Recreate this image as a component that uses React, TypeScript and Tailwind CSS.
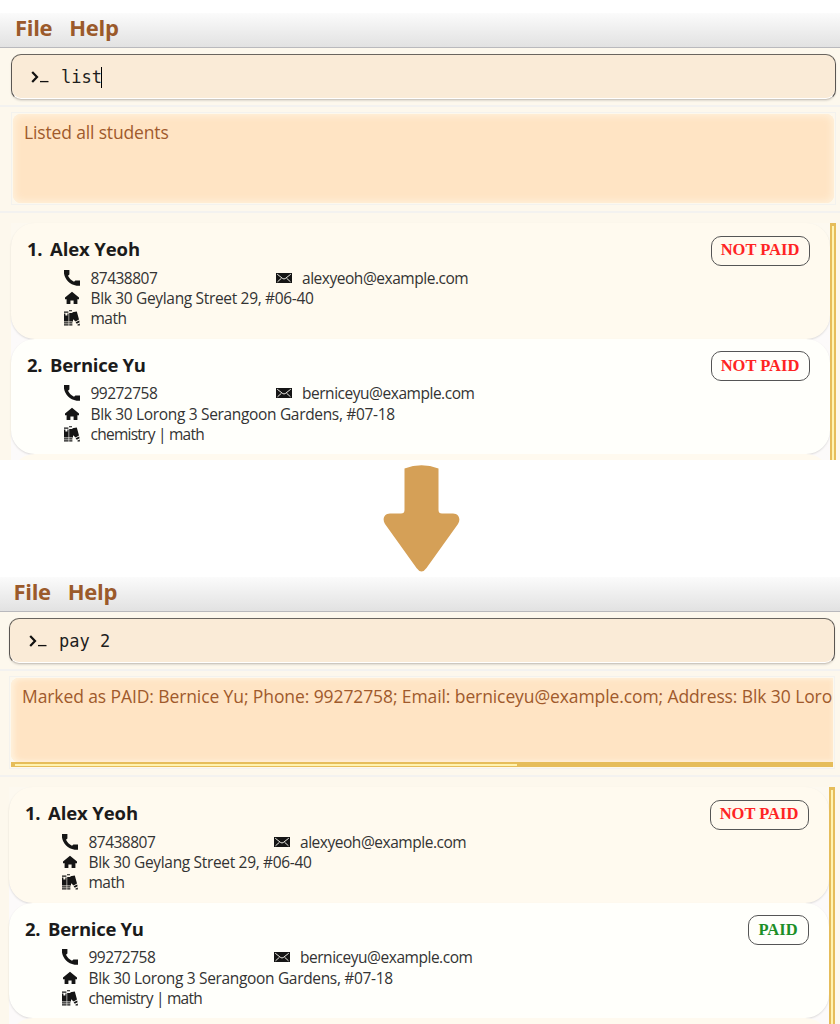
import React from "react";
import clsx from "clsx";

type Student = {
  name: string;
  phone: string;
  email: string;
  address: string;
  subjects: string;
  paid: boolean;
};

const alex: Student = {
  name: "Alex Yeoh",
  phone: "87438807",
  email: "alexyeoh@example.com",
  address: "Blk 30 Geylang Street 29, #06-40",
  subjects: "math",
  paid: false,
};

const bernice: Student = {
  name: "Bernice Yu",
  phone: "99272758",
  email: "berniceyu@example.com",
  address: "Blk 30 Lorong 3 Serangoon Gardens, #07-18",
  subjects: "chemistry | math",
  paid: false,
};

function PhoneIcon() {
  return (
    <svg className="h-4 w-4" viewBox="0 0 16 16" fill="#151515">
      <path d="M0 0H5.4V4.6L4 5.8C5.2 8.4 7.2 10.4 10 11.8L11.4 10.4H16V15.8H12.6C5.8 14.6 1 9.8 0 3.6Z" />
    </svg>
  );
}

function HomeIcon() {
  return (
    <svg className="h-4 w-4" viewBox="0 0 16 16" fill="#151515">
      <path d="M8 1.8L15 7.6V9.2H13.4V14H9.6V10.4H6.4V14H2.6V9.2H1V7.6Z" />
    </svg>
  );
}

function BooksIcon() {
  return (
    <svg className="h-4 w-4" viewBox="0 0 16 16" fill="#151515">
      <path d="M0 1.6H4.4V2.8H0ZM0 3.6H1.4V11.6H0ZM3.4 3.6H4.6V11.6H3.4ZM1.4 5.6H3.4V11.6H1.4ZM0 12.2H4.6V13.4H0ZM0 14.2H4.6V15.6H0Z" />
      <path d="M5 0.2H8V1.2H5ZM5.2 3H9V11.6H5.2ZM5.2 12.2H8.4V13.4H5.2ZM5.2 14.2H8.4V15.6H5.2Z" />
      <path d="M8.4 2.2L12.8 1.4L15 9.4L11.6 11.6L8.8 9ZM11.6 12.2L15.2 10.4L15.6 12.2L12.8 13.8ZM13.3 14.8L15.8 13.6V15.5H13.6Z" />
    </svg>
  );
}

function MailIcon() {
  return (
    <svg className="h-4 w-4" viewBox="0 0 16 16">
      <rect y="3" width="16" height="10" fill="#151515" />
      <path d="M1.2 4.2L6.8 8.6Q8 9.3 9.2 8.6L14.8 4.2M1.5 11.8L5.5 8.2M14.5 11.8L10.5 8.2" fill="none" stroke="#e8e6e0" strokeWidth="1" />
    </svg>
  );
}

function StudentCard({ student, index }: { student: Student; index: number }) {
  return (
    <div
      className={clsx(
        "flex h-[115.5px] shrink-0 items-start justify-between rounded-[24px] pl-4 pr-[20.5px] pt-3 text-[#333] shadow-[0_1px_2px_rgba(0,0,0,0.13)]",
        index % 2 ? "bg-[#fffffb]" : "bg-[#fffaef]",
      )}
    >
      <div className="flex flex-col">
        <div className="flex h-7 items-center text-[18.5px] font-bold text-[#1b1b1b]">
          <span className="w-[23px] tracking-[-0.3px]">{index + 1}.</span>
          <span className={clsx("whitespace-nowrap", index % 2 ? "tracking-[-0.28px]" : "tracking-[-0.1px]")}>{student.name}</span>
        </div>
        <div className="mt-[4.6px] grid grid-cols-[185px_auto] pl-[37px] text-[15.5px] leading-5">
          <div className="flex h-[20.3px] items-center gap-[10.5px]">
            <PhoneIcon />
            <span className="tracking-[-0.52px]">{student.phone}</span>
          </div>
          <div className="flex h-[20.3px] items-center gap-[10px] pl-[27px]">
            <MailIcon />
            <span className="tracking-[-0.47px]">{student.email}</span>
          </div>
          <div className="col-span-2 flex h-[20.3px] items-center gap-[10.5px] whitespace-nowrap">
            <HomeIcon />
            <span className="tracking-[-0.33px]">{student.address}</span>
          </div>
          <div className="col-span-2 flex h-[20.3px] items-center gap-[10.5px]">
            <BooksIcon />
            <span className={student.subjects.length > 4 ? "tracking-[-0.75px]" : "tracking-[-0.5px]"}>{student.subjects}</span>
          </div>
        </div>
      </div>
      <span
        className={clsx(
          "mt-[0.5px] flex h-[30px] items-center justify-center rounded-[10px] border-[1.5px] border-[#555] font-['Liberation_Serif',serif] text-[16.5px] font-bold",
          student.paid ? "w-[61px] text-[#1d8f27]" : "w-[99px] text-[#ff2424]",
        )}
      >
        {student.paid ? "PAID" : "NOT PAID"}
      </span>
    </div>
  );
}

type WindowProps = {
  command: string;
  message: string;
  students: Student[];
  caret?: boolean;
  scrollable?: boolean;
  inset: string;
};

function AppWindow({ command, message, students, caret, scrollable, inset }: WindowProps) {
  return (
    <section className="flex h-[447px] w-full shrink-0 flex-col overflow-hidden bg-[#fdf8ed]">
      <nav
        className={clsx(
          "flex h-[35px] shrink-0 items-center gap-[17px] border-b border-[#b9b9bd] bg-linear-to-b from-[#fbfbfb] to-[#e2e2e2] pb-1.5 text-[22px] font-bold tracking-[-0.3px] text-[#9b5a2b]",
          scrollable ? "pl-[13.5px]" : "pl-[15px]",
        )}
      >
        <span>File</span>
        <span>Help</span>
      </nav>

      <div className={clsx("h-[59px] shrink-0 border-b-2 border-[#f3f2f0] pt-[6px]", inset)}>
        <div className="flex h-[46px] items-center rounded-[10px] border-[1.5px] border-x-[#5a5652] border-t-[#6a655f] border-b-[#cdc8c0] bg-[#faebd7] pl-[18px] shadow-[inset_0_-1px_0_#fff,0_1px_2px_rgba(0,0,0,0.12)]">
          <svg className="h-4 w-[19px]" viewBox="0 0 19 16" fill="none" stroke="#111">
            <path d="M2.2 3L7 8L2.2 13" strokeWidth="2.2" />
            <path d="M10 12.6H18.5" strokeWidth="1.3" />
          </svg>
          <span className="ml-3 whitespace-pre pt-0.5 font-['DejaVu_Sans_Mono',monospace] text-[17px] text-[#1d1d1d]">{command}</span>
          {caret && <span className="-ml-px h-[21px] w-px bg-black" />}
        </div>
      </div>

      <div className={clsx("h-[106px] shrink-0 border-b-2 border-[#f3f2f0] pt-[5px]", inset)}>
        <div className="h-[93px] border border-[#f3f2ee] p-px">
          <div className="flex h-full flex-col overflow-hidden">
            <div
              className={clsx(
                "min-h-0 flex-1 overflow-hidden whitespace-nowrap bg-[#ffe4c4] pl-[11px] pt-[5.5px] text-[17.5px] leading-6 text-[#a05a2c]",
                scrollable
                  ? "rounded-l-[8px] tracking-[-0.1px] shadow-[inset_3px_0_6px_#fff1dc,inset_0_0_4px_#fff1dc]"
                  : "rounded-[8px] tracking-[-0.15px] shadow-[inset_0_0_7px_2px_#fff1dc]",
              )}
            >
              {message}
            </div>
            {scrollable && (
              <div className="h-[5px] shrink-0 bg-[#e6bd5a] py-[1.5px] pl-1">
                <div className="h-[2px] w-[502px] bg-[#fff3b0]" />
              </div>
            )}
          </div>
        </div>
      </div>

      <div className={clsx("flex min-h-0 flex-1 overflow-hidden pt-[10px]", inset)}>
        <div className="flex min-w-0 flex-1 flex-col bg-linear-to-b from-[#fdf9f0] from-[24px] to-[#fcfafa] to-[90px]">
          {students.map((student, index) => (
            <StudentCard key={student.name} student={student} index={index} />
          ))}
          <div className="h-8 shrink-0 rounded-t-[24px] bg-[#fffaef]" />
        </div>
        <div className="flex w-[6px] shrink-0 justify-center bg-[#e6bd5a] pt-[3px]">
          <div className="w-[2px] bg-[#fff3b0]" />
        </div>
      </div>
    </section>
  );
}

export default function App() {
  return (
    <main className="flex h-[1024px] w-[840px] flex-col overflow-hidden bg-white pt-[13px] font-['Open_Sans','Noto_Sans',sans-serif]">
      <AppWindow command="list" message="Listed all students" students={[alex, bernice]} caret inset="pl-[11px] pr-[4px]" />
      <div className="flex h-[117px] shrink-0 justify-center pt-[5px]">
        <svg className="ml-[3px] h-[107px] w-[77px]" viewBox="0 0 77 107" fill="#d5a057">
          <path d="M21.5 3.5Q38.5 -3 55.5 3.5V45Q55.5 48.5 59 48.5H70C76 48.5 78 54.5 75 59L43.5 103Q38.5 110 33.5 103L2 59C-1 54.5 1 48.5 7 48.5H18Q21.5 48.5 21.5 45Z" />
        </svg>
      </div>
      <AppWindow
        command="pay 2"
        message="Marked as PAID: Bernice Yu; Phone: 99272758; Email: berniceyu@example.com; Address: Blk 30 Loro"
        students={[alex, { ...bernice, paid: true }]}
        scrollable
        inset="pl-[9px] pr-[5px]"
      />
    </main>
  );
}
